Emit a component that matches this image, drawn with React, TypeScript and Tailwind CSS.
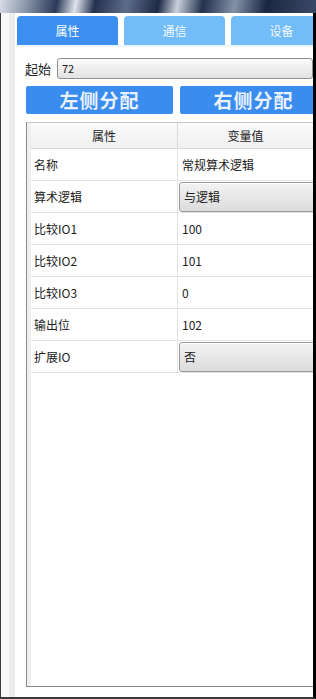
import { ChevronDown } from 'lucide-react';

const rows: { label: string; value: string; combo?: boolean }[] = [
  { label: '名称', value: '常规算术逻辑' },
  { label: '算术逻辑', value: '与逻辑', combo: true },
  { label: '比较IO1', value: '100' },
  { label: '比较IO2', value: '101' },
  { label: '比较IO3', value: '0' },
  { label: '输出位', value: '102' },
  { label: '扩展IO', value: '否', combo: true },
];

const tabs = ['属性', '通信', '设备'];

function ComboCell({ value }: { value: string }) {
  return (
    <div className="h-[30px] mt-[1px] ml-[1px] w-[180px] flex items-center pl-[4px] rounded-[3px] border border-[#9a9a9a] bg-[linear-gradient(#f3f3f3,#dcdcdc)] shadow-[inset_0_1px_0_#fff]">
      <span className="flex-1">{value}</span>
      <ChevronDown className="w-3 h-3 text-[#444] mr-2" />
    </div>
  );
}

export default function App() {
  return (
    <div className="w-[316px] h-[699px] overflow-hidden flex flex-col bg-black text-[12px] text-[#222] font-['Noto_Sans_CJK_SC','Microsoft_YaHei',sans-serif]">
      {/* background picture strip */}
      <div className="h-[13px] shrink-0 bg-[linear-gradient(100deg,#d8dde6_0%,#8e99ad_8%,#2b3a58_18%,#dfe4ec_24%,#24324f_30%,#5d6c8a_40%,#1d2a45_50%,#c9d0dc_56%,#23314e_64%,#8390a8_74%,#1b2742_84%,#3b4a68_100%)]" />

      <div className="flex-1 min-h-0 flex bg-white border-l border-l-[#3a3a3a] border-r-[3px] border-r-black border-b-2 border-b-[#3a3a3a]">
        {/* left gutter */}
        <div className="w-[8px] shrink-0 bg-[#f8f8f8]" />
        <div className="w-[6px] shrink-0 bg-[#ededed]" />

        <div className="flex-1 min-w-0 flex flex-col pt-[3px] pl-[1px] overflow-hidden">
          {/* tabs */}
          <div className="flex gap-[6px] h-[29px] shrink-0 pl-[1px]">
            {tabs.map((t, i) => (
              <div
                key={t}
                className={
                  i === 0
                    ? 'w-[101px] shrink-0 rounded-t-[4px] bg-[#3c8ff0] text-white flex items-center justify-center'
                    : 'w-[101px] shrink-0 rounded-t-[4px] bg-[#72bcf7] text-[#f2f8ff] flex items-center justify-center'
                }
              >
                {t}
              </div>
            ))}
          </div>
          <div className="h-[2px] shrink-0 bg-[#eef4fb]" />

          <div className="flex-1 min-h-0 flex flex-col pl-[10px]">
            {/* start field */}
            <div className="flex items-center h-[21px] mt-[11px] shrink-0">
              <span className="text-[13px] w-[32px] -ml-[1px]">起始</span>
              <div className="flex-1 h-[21px] flex items-center pl-[4px] text-[11px] border border-[#8f8f8f] rounded-[3px] bg-[linear-gradient(#fbfbfb,#e2e2e2)]">
                72
              </div>
            </div>

            {/* buttons */}
            <div className="flex gap-[7px] mt-[7px] h-[28px] shrink-0">
              <div className="w-[147px] shrink-0 rounded-[2px] bg-[#3a8cef] text-[#e9f1ff] text-[19px] font-semibold tracking-[1px] flex items-center justify-center">
                左侧分配
              </div>
              <div className="w-[147px] shrink-0 rounded-[2px] bg-[#3a8cef] text-[#e9f1ff] text-[19px] font-semibold tracking-[1px] flex items-center justify-center">
                右侧分配
              </div>
            </div>

            {/* property grid */}
            <div className="flex-1 min-h-0 mt-[8px] mb-[10px] flex border-l border-t border-b border-l-[#8a8a8a] border-t-[#c9c9c9] border-b-[#8a8a8a] bg-white">
              <div className="w-[4px] shrink-0 bg-[#efefef]" />
              <div className="flex-1 min-w-0 flex flex-col">
                <div className="h-[26px] shrink-0 flex border-b border-[#dadada] bg-[linear-gradient(#fafafa,#efefef)]">
                  <div className="w-[147px] shrink-0 flex items-center justify-center border-r border-[#dadada]">属性</div>
                  <div className="flex-1 min-w-0 flex items-center justify-center">变量值</div>
                </div>
                {rows.map((r) => (
                  <div key={r.label} className="h-[32px] shrink-0 flex border-b border-[#e3e3e3]">
                    <div className="w-[147px] shrink-0 flex items-center pl-[3px] border-r border-[#e3e3e3]">{r.label}</div>
                    <div className="flex-1 min-w-0">
                      {r.combo ? (
                        <ComboCell value={r.value} />
                      ) : (
                        <div className="h-full flex items-center pl-[4px]">{r.value}</div>
                      )}
                    </div>
                  </div>
                ))}
              </div>
            </div>
          </div>
        </div>
      </div>
    </div>
  );
}
